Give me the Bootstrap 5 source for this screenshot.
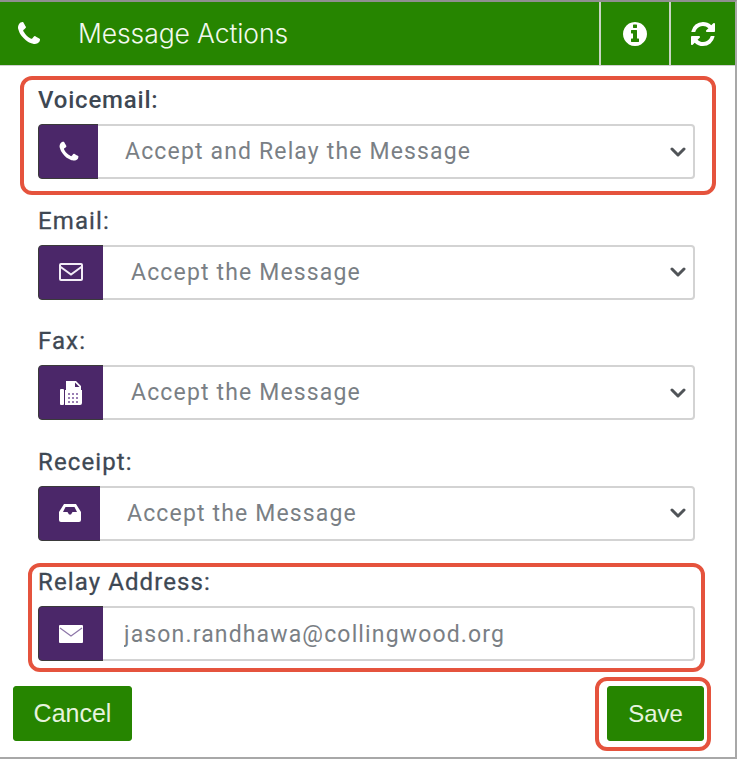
<!doctype html>
<html lang="en">
<head>
<meta charset="utf-8">
<title>Message Actions</title>
<link href="https://cdn.jsdelivr.net/npm/bootstrap@5.3.0/dist/css/bootstrap.min.css" rel="stylesheet">
<style>
html,body{background:#fff;margin:0;padding:0}
.sheet{position:relative;width:737px;height:759px;border-top:2px solid #8f8f8f;border-right:2px solid #a8a8a8;border-bottom:2px solid #a8a8a8;font-family:Roboto,"Liberation Sans",sans-serif;color:#3e4853}
.head-bar{height:64px;background:#268500;border-bottom:1px solid #d0d0d0;color:#fff}
.head-phone{width:78px;padding-left:15px}
.head-title{font-family:Inter,"Liberation Sans",sans-serif;font-size:26.5px;font-weight:300;color:#f2f9ee;margin:0;line-height:67px;letter-spacing:-.1px}
.head-cell{width:70px;height:100%;border-left:2px solid #c9d6c2}
.head-cell:last-child{width:66px}
.form-area{padding:20px 41px 0 38px;height:620px}
.lbl{display:block;font-size:24px;font-weight:500;line-height:28px;margin:0 0 10px;letter-spacing:.8px;color:#3e4853}
.lbl-soft{font-weight:400;letter-spacing:1.1px;-webkit-text-stroke:.3px #3e4853}
.field{margin-bottom:27.5px;flex-wrap:nowrap}
.field.input-group{height:55px;width:657px}
.field .input-group-text{background:#4b2769;border:1px solid #3a3a3a;border-radius:4px 0 0 4px;padding:0;justify-content:center;flex:none}
.w-60{width:61px}.w-65{width:66px}.w-62{width:63px}
.field .form-select,.field .form-control{height:55px;border:2px solid #d3d3d3;border-left:0;font-family:Roboto,sans-serif;font-size:23px;color:#7a7f85;letter-spacing:1.15px;background-color:#fff;border-radius:0 4px 4px 0;padding-top:2px;padding-bottom:0;box-shadow:none}
.field .form-select{background-image:url("data:image/svg+xml,%3csvg xmlns='http://www.w3.org/2000/svg' viewBox='0 0 16 16'%3e%3cpath fill='none' stroke='%23505458' stroke-linecap='round' stroke-linejoin='round' stroke-width='3' d='m2 5 6 6 6-6'/%3e%3c/svg%3e");background-size:16px 16px;background-position:right 7px center}
.pl-a{padding-left:27px}.pl-b{padding-left:28px}.pl-c{padding-left:27px}.pl-d{padding-left:21px}
.foot-row{padding:0 31px 0 13px}
.act-btn{background:#268500;border:1px solid #268500;color:#e6f3de;font-family:"Liberation Sans",sans-serif;font-size:25px;height:55px;border-radius:3px;padding:0}
.act-btn:hover{background:#268500;color:#e6f3de}
.b-cancel{width:119px}.b-save{width:97px;font-size:24px}
.callout{position:absolute;border:4px solid #e5533d;border-radius:12px;pointer-events:none}
.c1{left:19.5px;top:73.5px;width:696px;height:119.5px}
.c2{left:28px;top:560.5px;width:677px;height:109.5px}
.c3{left:595px;top:674.5px;width:116px;height:74.5px}
</style>
</head>
<body>
<div class="sheet">
  <div class="head-bar d-flex align-items-center">
    <div class="head-phone d-flex align-items-center">
      <svg width="28" height="28" viewBox="0 0 1792 1792" fill="#fff"><path d="M1600 1240q0 27-10 70.500t-21 68.500q-21 50-122 106-94 51-186 51-27 0-53-3.500t-57.500-12.500-47-14.500-55.500-20.500-49-18q-98-35-175-83-127-79-264-216t-216-264q-48-77-83-175-3-9-18-49t-20.500-55.500-14.500-47-12.500-57.500-3.500-53q0-92 51-186 56-101 106-122 25-11 68.500-21t70.500-10q14 0 21 3 18 6 53 76 11 19 30 54t35 63.500 31 53.500q3 4 17.500 25t21.500 35.500 7 28.500q0 20-28.500 50t-62 55-62 53-28.500 46q0 9 5 22.500t8.500 20.500 14 24 11.500 19q76 137 174 235t235 174q2 1 19 11.500t24 14 20.500 8.500 22.500 5q18 0 46-28.500t53-62 55-62 50-28.500q14 0 28.500 7t35.500 21.500 25 17.500q25 15 53.500 31t63.500 35 54 30q70 35 76 53 3 7 3 21z"/></svg>
    </div>
    <h1 class="head-title flex-grow-1">Message Actions</h1>
    <div class="head-cell d-flex align-items-center justify-content-center">
      <svg width="28" height="28" viewBox="0 0 1792 1792" fill="#fff"><path d="M1152 1376v-160q0-14-9-23t-23-9h-96v-512q0-14-9-23t-23-9h-320q-14 0-23 9t-9 23v160q0 14 9 23t23 9h96v320h-96q-14 0-23 9t-9 23v160q0 14 9 23t23 9h448q14 0 23-9t9-23zm-128-896v-160q0-14-9-23t-23-9h-192q-14 0-23 9t-9 23v160q0 14 9 23t23 9h192q14 0 23-9t9-23zm640 416q0 209-103 385.500t-279.500 279.500-385.500 103-385.500-103-279.500-279.500-103-385.500 103-385.500 279.500-279.500 385.500-103 385.500 103 279.500 279.500 103 385.500z"/></svg>
    </div>
    <div class="head-cell d-flex align-items-center justify-content-center">
      <svg width="28" height="28" viewBox="0 0 1792 1792" fill="#fff"><path d="M1639 1056q0 5-1 7-64 268-268 434.500t-478 166.500q-146 0-282.500-55t-243.500-157l-129 129q-19 19-45 19t-45-19-19-45v-448q0-26 19-45t45-19h448q26 0 45 19t19 45-19 45l-137 137q71 66 161 102t187 36q134 0 250-65t186-179q11-17 53-117 8-23 30-23h192q13 0 22.500 9.500t9.500 22.500zm25-800v448q0 26-19 45t-45 19h-448q-26 0-45-19t-19-45 19-45l138-138q-148-137-349-137-134 0-250 65t-186 179q-11 17-53 117-8 23-30 23h-199q-13 0-22.500-9.500t-9.500-22.500v-7q65-268 270-434.500t480-166.500q146 0 284 55.500t245 156.500l130-129q19-19 45-19t45 19 19 45z"/></svg>
    </div>
  </div>

  <div class="form-area">
    <label class="lbl" for="f1">Voicemail:</label>
    <div class="input-group field">
      <span class="input-group-text w-60">
        <svg width="24" height="24" viewBox="0 0 1792 1792" fill="#fff"><path d="M1600 1240q0 27-10 70.500t-21 68.500q-21 50-122 106-94 51-186 51-27 0-53-3.500t-57.500-12.500-47-14.500-55.500-20.500-49-18q-98-35-175-83-127-79-264-216t-216-264q-48-77-83-175-3-9-18-49t-20.500-55.500-14.500-47-12.500-57.500-3.500-53q0-92 51-186 56-101 106-122 25-11 68.500-21t70.500-10q14 0 21 3 18 6 53 76 11 19 30 54t35 63.500 31 53.500q3 4 17.500 25t21.500 35.500 7 28.500q0 20-28.500 50t-62 55-62 53-28.500 46q0 9 5 22.500t8.500 20.500 14 24 11.500 19q76 137 174 235t235 174q2 1 19 11.500t24 14 20.500 8.500 22.500 5q18 0 46-28.500t53-62 55-62 50-28.500q14 0 28.500 7t35.500 21.500 25 17.500q25 15 53.500 31t63.500 35 54 30q70 35 76 53 3 7 3 21z"/></svg>
      </span>
      <select id="f1" class="form-select pl-a"><option>Accept and Relay the Message</option></select>
    </div>

    <label class="lbl lbl-soft" for="f2">Email:</label>
    <div class="input-group field">
      <span class="input-group-text w-65">
        <svg width="24" height="20" viewBox="0 0 24 20" fill="none" stroke="#f3edf7" stroke-width="2"><rect x="1" y="2" width="22" height="16" rx="1"/><path d="M1 4.500l11 8 11-8"/></svg>
      </span>
      <select id="f2" class="form-select pl-b"><option>Accept the Message</option></select>
    </div>

    <label class="lbl lbl-soft" for="f3">Fax:</label>
    <div class="input-group field">
      <span class="input-group-text w-65">
        <svg width="24" height="26" viewBox="0 0 24 26"><path fill="#fff" d="M7 1h10l5 5v4h1v13a2 2 0 0 1-2 2H6V10h1z"/><rect x="1" y="9" width="4" height="16" rx="1" fill="#fff"/><path fill="#4b2769" d="M16 2.500V7h4.500z"/><path fill="#9a7fb4" d="M9 13h2v2H9zm4 0h2v2h-2zm4 0h2v2h-2zM9 17h2v2H9zm4 0h2v2h-2zm4 0h2v2h-2zM9 21h2v2H9zm4 0h2v2h-2zm4 0h2v2h-2z"/></svg>
      </span>
      <select id="f3" class="form-select pl-b"><option>Accept the Message</option></select>
    </div>

    <label class="lbl lbl-soft" for="f4">Receipt:</label>
    <div class="input-group field">
      <span class="input-group-text w-62">
        <svg width="22" height="18" viewBox="0 0 22 18"><path fill="#fff" fill-rule="evenodd" d="M5 0h12l5 8v8a2 2 0 0 1-2 2H2a2 2 0 0 1-2-2V8zM6.500 3L4 8h4.500l1.500 2.500h2L13.500 8H18l-2.500-5z"/></svg>
      </span>
      <select id="f4" class="form-select pl-c"><option>Accept the Message</option></select>
    </div>

    <label class="lbl lbl-soft" for="f5">Relay Address:</label>
    <div class="input-group field">
      <span class="input-group-text w-65">
        <svg width="24" height="20" viewBox="0 0 24 20"><rect y="1" width="24" height="18" rx="1" fill="#fff"/><path d="M1 4l11 8 11-8" fill="none" stroke="#8d76a8" stroke-width="1.200"/></svg>
      </span>
      <input id="f5" class="form-control pl-d" type="text" value="jason.randhawa@collingwood.org">
    </div>
  </div>

  <div class="foot-row d-flex justify-content-between">
    <button class="btn act-btn b-cancel" type="button">Cancel</button>
    <button class="btn act-btn b-save" type="button">Save</button>
  </div>

  <div class="callout c1"></div>
  <div class="callout c2"></div>
  <div class="callout c3"></div>
</div>
<script src="https://cdn.jsdelivr.net/npm/bootstrap@5.3.0/dist/js/bootstrap.bundle.min.js"></script>
</body>
</html>
